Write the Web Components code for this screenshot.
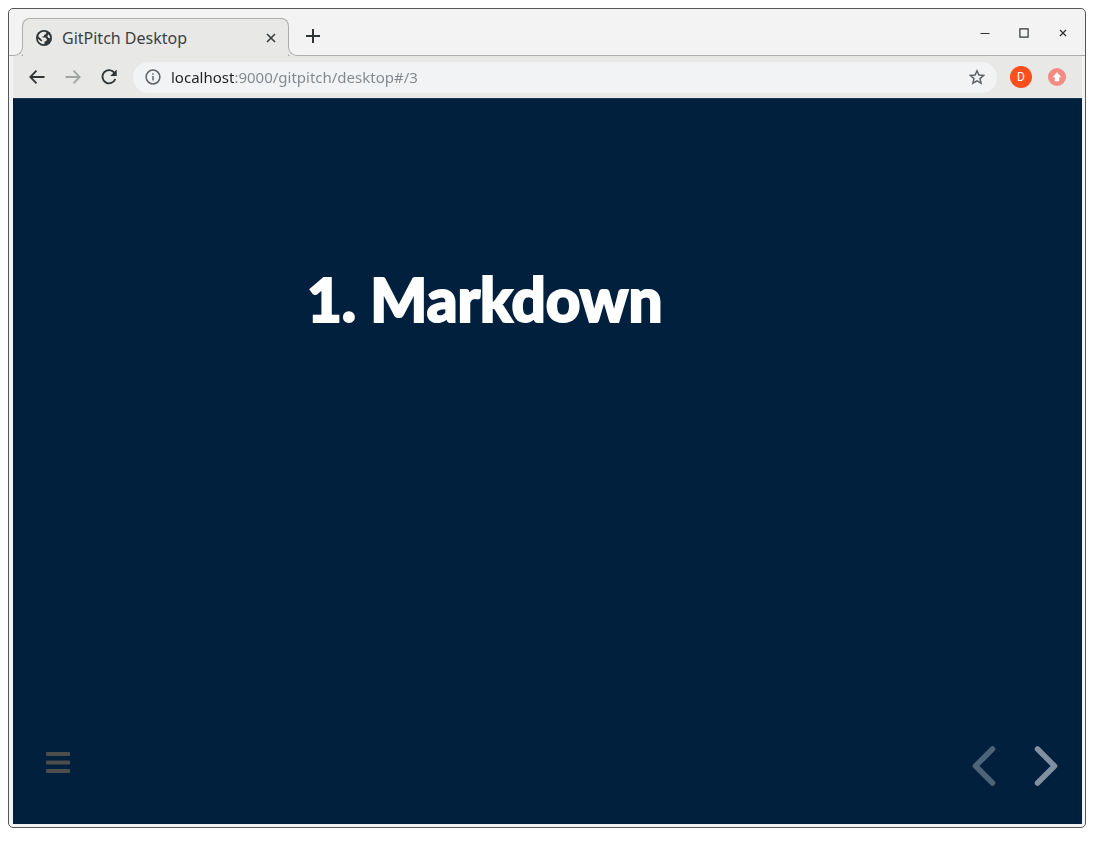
<!DOCTYPE html>
<html lang="en">
<head>
<meta charset="utf-8">
<meta name="viewport" content="width=device-width, initial-scale=1">
<title>GitPitch Desktop</title>
<style>
  body { margin: 0; background: #fff; font-family: "Noto Sans", "Open Sans", sans-serif; color: #33373a; }
</style>
</head>
<body>
<browser-window>
  <tab-strip slot="strip">
    <browser-tab>GitPitch Desktop</browser-tab>
  </tab-strip>
  <browser-toolbar slot="toolbar">
    <address-bar value="localhost:9000/gitpitch/desktop#/3"></address-bar>
  </browser-toolbar>
  <slide-deck>
    <h1>1. Markdown</h1>
  </slide-deck>
</browser-window>
<script>
const reset = `
  :host, *, *::before, *::after { box-sizing: border-box; }
  button { display: grid; place-items: center; margin: 0; padding: 0; border: 0; background: none; color: inherit; font: inherit; cursor: pointer; }
  svg { display: block; }
`;
function define(name, html) {
  customElements.define(name, class extends HTMLElement {
    constructor() {
      super();
      const root = this.attachShadow({ mode: "open" });
      const template = document.createElement("template");
      template.innerHTML = html;
      root.append(template.content.cloneNode(true));
      root.prepend(Object.assign(document.createElement("style"), { textContent: reset }));
    }
    connectedCallback() {
      const field = this.shadowRoot.querySelector("input");
      if (field) field.value = this.getAttribute("value") || "";
    }
  });
}

define("browser-window", `
  <style>
    :host { display: block; padding: 8px 14px 14px 8px; --bar: #e8e8e6; --strip: #f4f3f3; --line: #adadad; }
    .frame { display: flex; flex-direction: column; min-height: calc(100vh - 22px); border: 1px solid #55575a; border-radius: 5px; background: var(--strip); overflow: hidden; }
    .inner { flex: 1; display: flex; flex-direction: column; padding: 0 3px 3px 4px; }
    ::slotted(slide-deck) { flex: 1; }
  </style>
  <div class="frame">
    <slot name="strip"></slot>
    <div class="inner">
      <slot name="toolbar"></slot>
      <slot></slot>
    </div>
  </div>`);

define("tab-strip", `
  <style>
    :host { display: flex; height: 47px; padding: 9px 10px 0 13px; border-bottom: 1px solid var(--line); color: #2e3436; }
    .new { width: 32px; height: 36px; margin-left: 8px; }
    .controls { display: flex; gap: 15px; margin-left: auto; padding-top: 3px; }
    .controls button { width: 24px; height: 24px; }
  </style>
  <slot></slot>
  <button class="new" aria-label="New tab"><svg width="14" height="14" viewBox="0 0 14 14" stroke="currentColor" stroke-width="2"><path d="M7 0v14M0 7h14"/></svg></button>
  <div class="controls">
    <button aria-label="Minimize"><svg width="10" height="10" viewBox="0 0 10 10" stroke="currentColor"><path d="M.5 5.5h9"/></svg></button>
    <button aria-label="Maximize"><svg width="10" height="10" viewBox="0 0 10 10" fill="none" stroke="currentColor" stroke-width="1.2"><path d="M.9 .9h8.2v8.2H.9z"/></svg></button>
    <button aria-label="Close window"><svg width="8" height="8" viewBox="0 0 8 8" stroke="currentColor" stroke-width="1.3"><path d="M1 1l6 6M7 1L1 7"/></svg></button>
  </div>`);

define("browser-tab", `
  <style>
    :host { position: relative; display: flex; align-items: center; width: 267px; height: 38px; margin-bottom: -1px; padding: 0 9px 0 13px; gap: 10px; border: 1px solid var(--line); border-bottom: 0; border-radius: 8px 8px 0 0; background: var(--bar); color: #3c4043; font-size: 16px; line-height: 22px; }
    :host::before, :host::after { content: ""; box-sizing: border-box; position: absolute; bottom: 0; width: 10px; height: 10px; background: var(--strip); border-bottom: 1px solid var(--line); }
    :host::before { left: -10px; border-right: 1px solid var(--line); border-bottom-right-radius: 9px; box-shadow: 1px 1px 0 1px var(--bar); clip-path: inset(0 -1px 0 0); }
    :host::after { right: -10px; border-left: 1px solid var(--line); border-bottom-left-radius: 9px; box-shadow: -1px 1px 0 1px var(--bar); clip-path: inset(0 0 0 -1px); }
    span { flex: 1; white-space: nowrap; }
    button { width: 16px; height: 16px; }
  </style>
  <svg width="16" height="16" viewBox="0 0 16 16"><circle cx="8" cy="8" r="8" fill="#303538"/><path d="M8.500 1.800L10.500 2.500 9.800 4.300 8.200 4.800 8 6.200 6.300 6.600 6.600 7.600H9.500L11 9.400 10.200 11 8.700 11.500 8.300 14.200C5 14.300 2.200 12 1.800 8.800L5.500 11.500 6.300 10.500 5 9 2.200 6.300C2.900 3.800 5.400 1.700 8.500 1.800z" fill="#e8e8e6"/><path d="M12.500 4.200c1.200 1.200 1.700 2.600 1.600 4.200L12.300 7.800 11.300 6.300z" fill="#e8e8e6"/></svg>
  <span><slot></slot></span>
  <button aria-label="Close tab"><svg width="10" height="10" viewBox="0 0 10 10" stroke="currentColor" stroke-width="1.700"><path d="M1 1l8 8M9 1L1 9"/></svg></button>`);

define("browser-toolbar", `
  <style>
    :host { display: flex; align-items: center; height: 42px; padding: 0 13px 0 12px; background: var(--bar); color: #303538; }
    .nav { display: flex; gap: 12px; margin-right: 12px; }
    .nav button, .menu { width: 24px; height: 24px; }
    .nav button:disabled { color: #a2a4a4; }
    ::slotted(address-bar) { flex: 1; }
    .user { width: 22px; height: 22px; margin: 0 13px; border-radius: 50%; background: #fc4f1c; color: #fff; font: 12px/22px Roboto, sans-serif; }
  </style>
  <div class="nav">
    <button aria-label="Back"><svg width="16" height="14" viewBox="0 0 16 14" fill="none" stroke="currentColor" stroke-width="1.800"><path d="M7.500 .700L1.300 7l6.200 6.300M1.500 7H15.500"/></svg></button>
    <button aria-label="Forward" disabled><svg width="16" height="14" viewBox="0 0 16 14" fill="none" stroke="currentColor" stroke-width="1.800"><path d="M8.500 .700L14.700 7l-6.200 6.300M14.500 7H.5"/></svg></button>
    <button aria-label="Reload"><svg width="16" height="16" viewBox="0 0 16 16" fill="none" stroke="currentColor" stroke-width="1.900"><path d="M13.500 3.900A6.600 6.600 0 1 0 14.300 10"/><path d="M15.700 .5v6.500H9.200z" fill="currentColor" stroke="none"/></svg></button>
  </div>
  <slot></slot>
  <button class="user" aria-label="Profile">D</button>
  <button class="menu" aria-label="Update available"><svg width="18" height="18" viewBox="0 0 18 18"><circle cx="9" cy="9" r="9" fill="#f28b82"/><path d="M9 4.300l4.400 4.900h-2.200v4H6.800v-4H4.600z" fill="#fff"/></svg></button>`);

define("address-bar", `
  <style>
    :host { display: flex; align-items: center; height: 31px; min-width: 0; padding: 0 8px 0 12px; border-radius: 16px; background: #f1f3f4; color: #5f6368; }
    input { flex: 1; min-width: 0; height: 24px; margin: 0 8px 0 10px; padding: 0; border: 0; outline: 0; font-family: inherit; font-size: 15px; color: #80868b; -webkit-text-fill-color: transparent; background: linear-gradient(90deg, #202124 64px, #80868b 64px); -webkit-background-clip: text; background-clip: text; }
    button { width: 24px; height: 24px; }
  </style>
  <svg width="16" height="16" viewBox="0 0 16 16" fill="none" stroke="currentColor" stroke-width="1.500"><circle cx="8" cy="8" r="6.900"/><path d="M8 7v4.600M8 4.200v1.600"/></svg>
  <input type="text" aria-label="Address" spellcheck="false">
  <button aria-label="Bookmark this page"><svg width="16" height="16" viewBox="0 0 16 16" fill="none" stroke="currentColor" stroke-width="1.500"><path d="M8 1.800l1.900 4.300 4.700 .4L11 9.600l1.100 4.600L8 11.800l-4.100 2.400L5 9.600 1.400 6.500l4.700-.4z"/></svg></button>`);

define("slide-deck", `
  <style>
    :host { display: flex; flex-direction: column; background: #00203e; color: #fff; border-top: 1px solid #1b3550; }
    main { flex: 1; padding: 160px 24px 24px 27.5%; }
    ::slotted(h1) { margin: 0; font: 900 60px/80px Lato, sans-serif; white-space: nowrap; -webkit-text-stroke: 2px currentColor; }
    nav { display: flex; justify-content: space-between; align-items: flex-start; padding: 0 16px 34px 32px; }
    button { width: 40px; height: 48px; }
    .menu { width: 26px; height: 42px; color: #4d4d4d; }
    .arrows { display: flex; gap: 22px; }
    .prev { color: #4d6378; }
    .next { color: #8090a0; }
  </style>
  <main><slot></slot></main>
  <nav aria-label="Slides">
    <button class="menu" aria-label="Menu"><svg width="24" height="22" viewBox="0 0 24 22" fill="currentColor"><rect width="24" height="4" rx="1"/><rect y="8.500" width="24" height="4" rx="1"/><rect y="17" width="24" height="4" rx="1"/></svg></button>
    <div class="arrows">
      <button class="prev" aria-label="Previous slide"><svg width="24" height="40" viewBox="0 0 24 40" fill="none" stroke="currentColor" stroke-width="5.500" stroke-linecap="round" stroke-linejoin="round"><path d="M20.500 3L3.500 20l17 17"/></svg></button>
      <button class="next" aria-label="Next slide"><svg width="24" height="40" viewBox="0 0 24 40" fill="none" stroke="currentColor" stroke-width="5.500" stroke-linecap="round" stroke-linejoin="round"><path d="M3.500 3l17 17-17 17"/></svg></button>
    </div>
  </nav>`);
</script>
</body>
</html>
